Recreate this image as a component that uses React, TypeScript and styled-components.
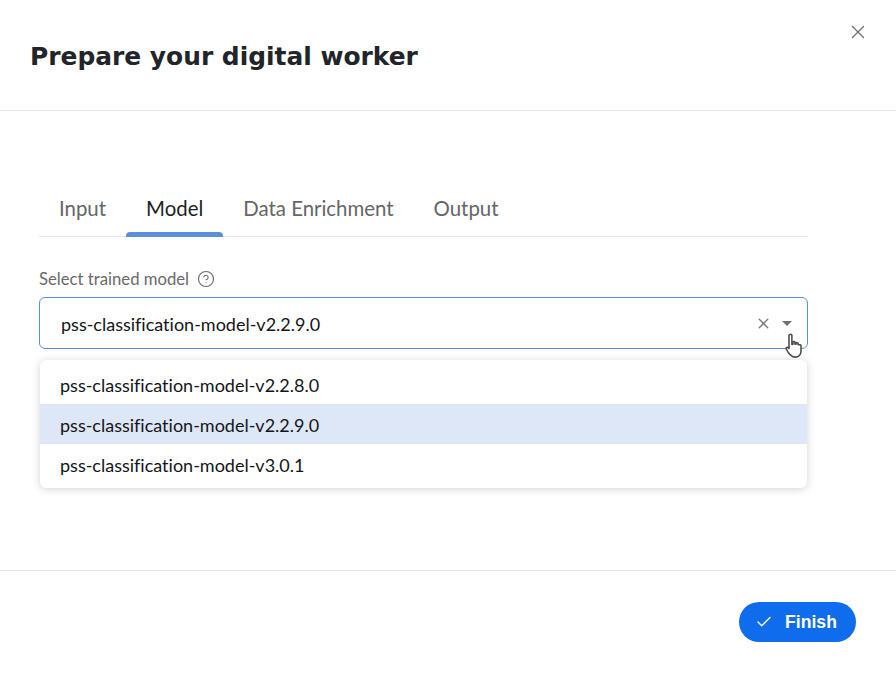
import styled, { createGlobalStyle } from "styled-components";
import { X, Check, CircleHelp } from "lucide-react";

const GlobalStyle = createGlobalStyle`
  html, body {
    margin: 0;
    padding: 0;
    background: #ffffff;
  }
  * {
    box-sizing: border-box;
  }
`;

const BODY_FONT = `"Lato", "Noto Sans", sans-serif`;

const Dialog = styled.div`
  position: relative;
  width: 896px;
  height: 673px;
  display: flex;
  flex-direction: column;
  font-family: ${BODY_FONT};
  font-variant-ligatures: none;
  background: #fff;
  overflow: hidden;
`;

const Header = styled.header`
  height: 111px;
  flex: none;
  display: flex;
  align-items: center;
  padding: 2px 0 0 30px;
  border-bottom: 1px solid #e6e6e6;
`;

const Title = styled.h1`
  margin: 0;
  font-family: "DejaVu Sans", sans-serif;
  font-size: 24.9px;
  font-weight: 700;
  color: #212529;
`;

const CloseButton = styled.button`
  position: absolute;
  top: 21px;
  right: 27px;
  width: 22px;
  height: 22px;
  padding: 0;
  display: flex;
  align-items: center;
  justify-content: center;
  border: none;
  background: transparent;
  color: #6c6f76;
`;

const Content = styled.main`
  flex: 1;
  padding: 77px 88px 0 39px;
`;

const TabList = styled.div`
  display: flex;
  height: 49px;
  border-bottom: 1px solid #e6e6e6;
`;

const Tab = styled.div<{ $selected?: boolean }>`
  position: relative;
  padding: 8px 20px 0;
  font-size: 20.4px;
  line-height: 24px;
  color: ${({ $selected }) => ($selected ? "#1d1f24" : "#666666")};

  &::after {
    content: "";
    display: ${({ $selected }) => ($selected ? "block" : "none")};
    position: absolute;
    left: 0;
    right: 0;
    bottom: -1px;
    height: 5px;
    border-radius: 4px 4px 0 0;
    background: #5a8fdb;
  }
`;

const Field = styled.div`
  position: relative;
  margin-top: 32px;
`;

const LabelRow = styled.div`
  display: flex;
  align-items: center;
  gap: 8px;
  height: 20px;
  font-size: 16.7px;
  color: #6a6a6a;
`;

const SelectBox = styled.div`
  margin-top: 8px;
  height: 52px;
  display: flex;
  align-items: center;
  padding: 2px 15px 0 21px;
  border: 1px solid #5a8fdb;
  border-radius: 6px;
  font-size: 18px;
  color: #14151a;
`;

const SelectValue = styled.span`
  flex: 1;
`;

const ClearIcon = styled(X)`
  color: #777;
  margin: -2px 10px 0 0;
`;

const Caret = styled.span`
  width: 0;
  height: 0;
  margin-top: -2px;
  border-left: 5px solid transparent;
  border-right: 5px solid transparent;
  border-top: 5px solid #6f6f6f;
`;

const Cursor = styled.svg`
  position: absolute;
  left: 746px;
  top: 64px;
`;

const Menu = styled.div`
  position: absolute;
  top: 91px;
  left: 1px;
  right: 1px;
  padding: 4px 0;
  background: #fff;
  border-radius: 6px;
  box-shadow: 0 1px 8px rgba(0, 0, 0, 0.18);
`;

const Option = styled.div<{ $active?: boolean }>`
  height: 40px;
  display: flex;
  align-items: center;
  padding: 2px 0 0 20px;
  font-size: 18px;
  color: #14151a;
  background: ${({ $active }) => ($active ? "#dee7f7" : "transparent")};
`;

const Footer = styled.footer`
  height: 103px;
  flex: none;
  display: flex;
  justify-content: flex-end;
  padding: 31px 40px 0 0;
  border-top: 1px solid #e6e6e6;
`;

const FinishButton = styled.button`
  width: 117px;
  height: 40px;
  display: flex;
  align-items: center;
  justify-content: center;
  gap: 12px;
  padding-right: 9px;
  border: none;
  border-radius: 20px;
  background: #0f6cec;
  color: #fff;
  font-family: "Liberation Sans", Arial, sans-serif;
  font-size: 17.6px;
  font-weight: 700;
`;

const tabs = ["Input", "Model", "Data Enrichment", "Output"];
const models = [
  "pss-classification-model-v2.2.8.0",
  "pss-classification-model-v2.2.9.0",
  "pss-classification-model-v3.0.1",
];

export default function App() {
  return (
    <>
      <GlobalStyle />
      <Dialog>
        <Header>
          <Title>Prepare your digital worker</Title>
        </Header>
        <CloseButton aria-label="Close">
          <X size={22} strokeWidth={1.4} />
        </CloseButton>
        <Content>
          <TabList>
            {tabs.map((t) => (
              <Tab key={t} $selected={t === "Model"}>
                {t}
              </Tab>
            ))}
          </TabList>
          <Field>
            <LabelRow>
              Select trained model
              <CircleHelp size={18} strokeWidth={1.5} />
            </LabelRow>
            <SelectBox>
              <SelectValue>pss-classification-model-v2.2.9.0</SelectValue>
              <ClearIcon size={17} strokeWidth={1.75} />
              <Caret />
            </SelectBox>
            <Menu>
              {models.map((m) => (
                <Option key={m} $active={m === models[1]}>
                  {m}
                </Option>
              ))}
            </Menu>
            <Cursor width="20" height="27" viewBox="0 0 18 26">
              <path
                d="M4 1.5c1-.8 2 0 2 1v8.5l1-.2V8.6c.8-.7 1.8-.5 2 .5v1.6l1 .1V9.6c.8-.6 1.7-.4 2 .5v1.2l1 .1c.8-.4 1.7 0 1.8.9v4.7c0 2.6-1.6 5.4-4.6 6.2-2.5.3-4.4-.6-5.7-2.2-1.5-1.4-2.9-3.4-3.8-5.4-.6-1 .3-2.2 1.4-1.6l1.1.9V2.5z"
                fill="#fff"
                stroke="#4a4a4a"
                strokeWidth="1.5"
                strokeLinejoin="round"
              />
            </Cursor>
          </Field>
        </Content>
        <Footer>
          <FinishButton>
            <Check size={18} strokeWidth={1.75} />
            Finish
          </FinishButton>
        </Footer>
      </Dialog>
    </>
  );
}
